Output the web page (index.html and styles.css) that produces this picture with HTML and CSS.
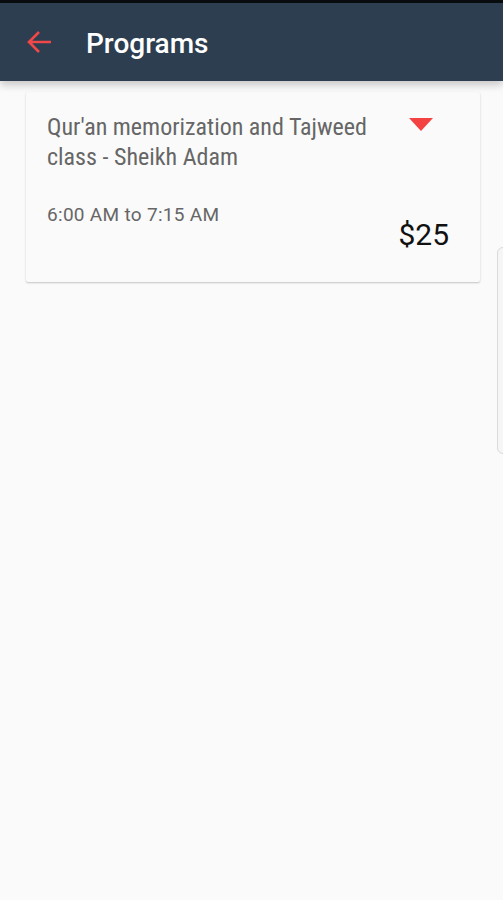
FILE: index.html
```html
<!DOCTYPE html>
<html lang="en">

<head>
    <meta charset="UTF-8">
    <meta name="viewport" content="width=device-width, initial-scale=1.0">
    <title>Programs</title>
    <link rel="stylesheet" href="styles.css">
</head>

<body>
    <div id="statusbar"></div>
    <div id="toolbar">
        <div id="back">
            <svg width="26" height="22" viewBox="0 0 26 22">
                <path d="M2 11 H24 M12 1 L2 11 L12 21" fill="none" stroke="#f04848" stroke-width="2.6" />
            </svg>
        </div>
        <div id="title">Programs</div>
    </div>

    <div id="content">
        <div class="card">
            <div class="card-top">
                <div class="program-name">Qur'an memorization and Tajweed class - Sheikh Adam</div>
                <div class="caret"></div>
            </div>
            <div class="card-bottom">
                <div class="program-time">6:00 AM to 7:15 AM</div>
                <div class="program-price">$25</div>
            </div>
        </div>
    </div>

    <div id="edge-handle"></div>
</body>

</html>
```

FILE: styles.css
```css
body {
    margin: 0;
    background-color: #fafafa;
    font-family: Roboto, "Noto Sans", sans-serif;
    height: 900px;
    overflow: hidden;
}

#statusbar {
    height: 3px;
    background-color: #0a0d10;
}

#toolbar {
    height: 78px;
    background-color: #2c3e50;
    display: flex;
    align-items: center;
    box-shadow: 0 4px 8px rgba(0, 0, 0, 0.2);
    position: relative;
}

#back {
    width: 26px;
    margin-left: 27px;
    display: flex;
}

#title {
    margin-left: 33px;
    margin-top: 3px;
    color: #ffffff;
    font-size: 28px;
    font-weight: 500;
}

#content {
    padding: 11px 23px 0 26px;
}

.card {
    background-color: #fafafa;
    border-radius: 2px;
    box-shadow: 0 1px 2px rgba(0, 0, 0, 0.22);
    padding: 20px 31px 29px 21px;
}

.card-top {
    display: flex;
    justify-content: space-between;
    align-items: flex-start;
}

.program-name {
    width: 345px;
    color: #666666;
    font-family: "Roboto Condensed", "Liberation Sans Narrow", Roboto, sans-serif;
    font-size: 24px;
    line-height: 30px;
}

.caret {
    margin-top: 6px;
    margin-right: 16px;
    width: 0;
    height: 0;
    border-left: 12px solid transparent;
    border-right: 12px solid transparent;
    border-top: 13px solid #f44242;
}

.card-bottom {
    display: flex;
    justify-content: space-between;
    align-items: flex-start;
    margin-top: 31px;
}

.program-time {
    color: #666666;
    font-size: 19px;
    line-height: 24px;
    letter-spacing: 0.3px;
}

.program-price {
    margin-top: 14px;
    color: #111111;
    font-size: 30px;
    line-height: 36px;
}

#edge-handle {
    position: absolute;
    top: 247px;
    left: 497px;
    width: 12px;
    height: 205px;
    border: 1px solid #dadada;
    border-radius: 6px;
    background-color: #f6f6f6;
}
```
